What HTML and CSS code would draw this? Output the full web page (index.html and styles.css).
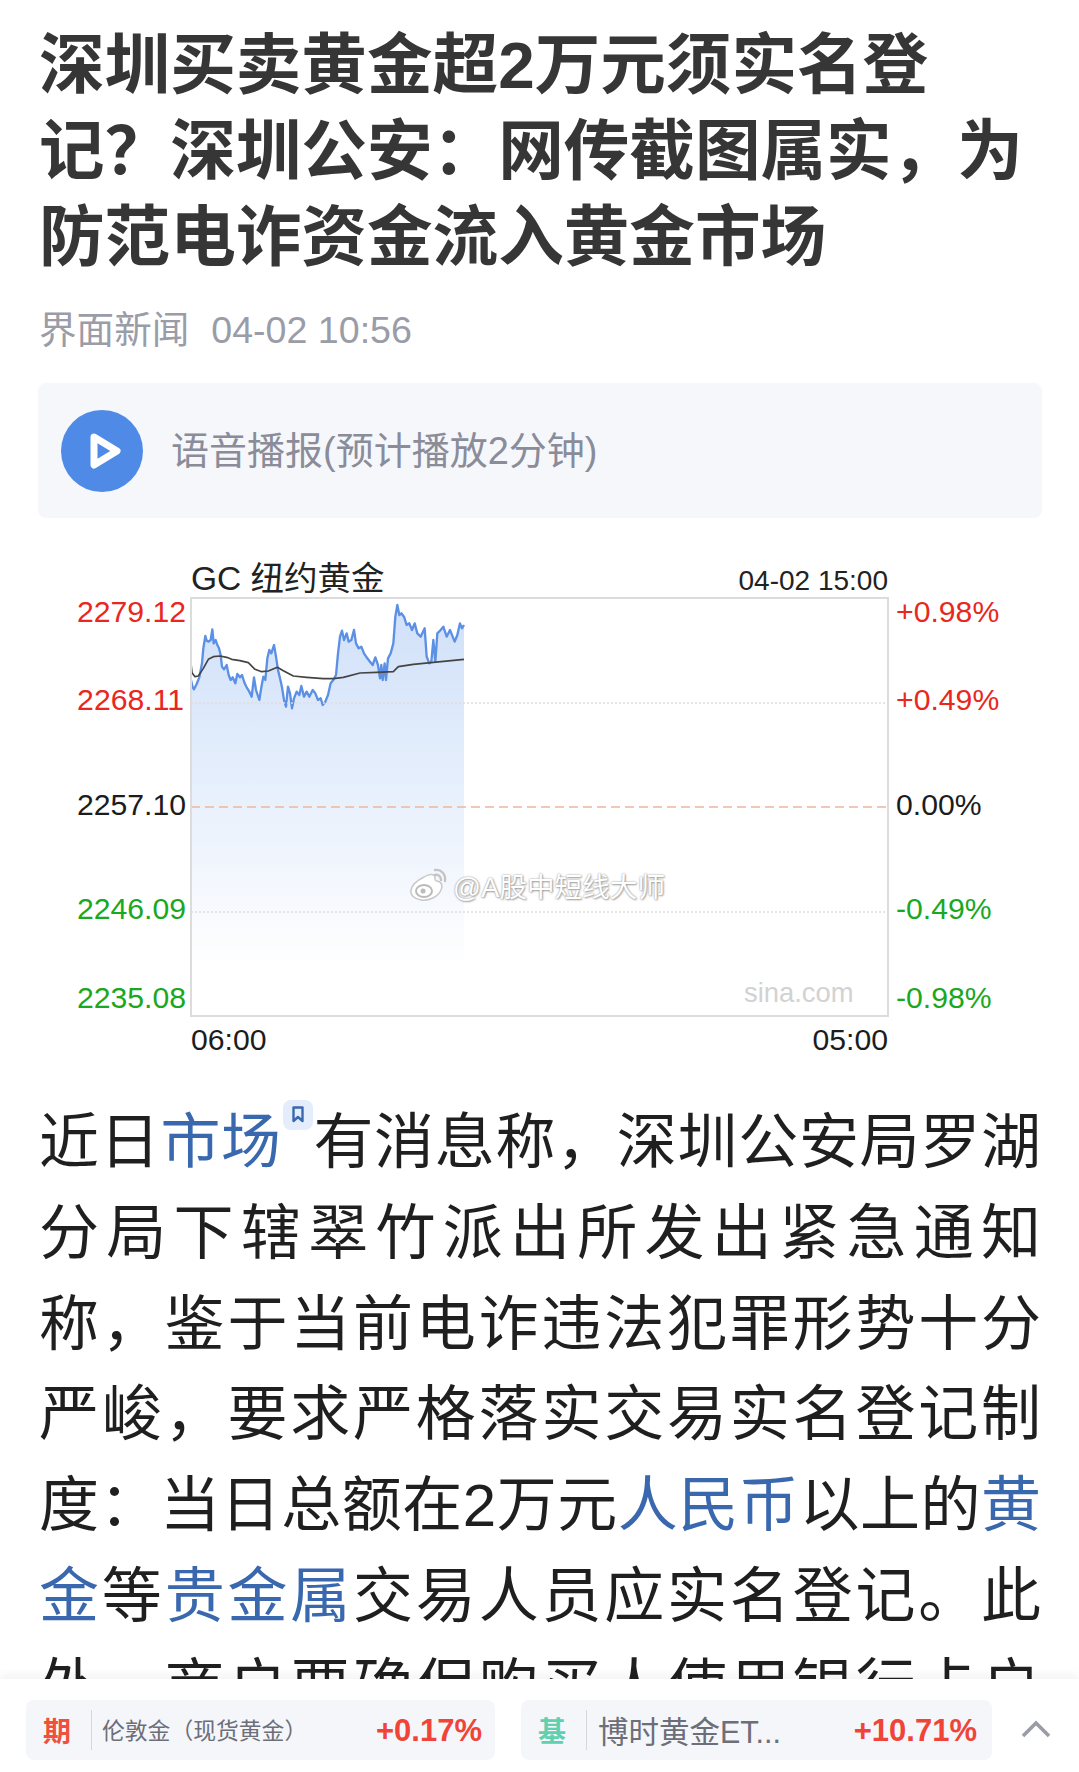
FILE: index.html
```html
<!DOCTYPE html>
<html lang="zh-CN">
<head>
	<meta charset="utf-8">
	<title>深圳买卖黄金超2万元须实名登记</title>
	<link rel="stylesheet" href="styles.css">
</head>
<body>
<div class="page">
	<main class="article">
		<h1 class="title">深圳买卖黄金超2万元须实名登记？深圳公安：网传截图属实，为防范电诈资金流入黄金市场</h1>
		<p class="meta"><span>界面新闻</span><span>04-02 10:56</span></p>

		<div class="voice">
			<svg class="voice-icon" width="82" height="82" viewBox="0 0 82 82">
				<circle cx="41" cy="41" r="41" fill="#4f8ae6"/>
				<path d="M33 27 L56 41 L33 55 Z" fill="#4f8ae6" stroke="#fff" stroke-width="7" stroke-linejoin="round"/>
			</svg>
			<span class="voice-text">语音播报(预计播放2分钟)</span>
		</div>

		<div class="chart">
			<svg class="chart-svg" width="1000" height="510" viewBox="39 550 1000 510">
				<defs>
					<linearGradient id="area" gradientUnits="userSpaceOnUse" x1="0" y1="0" x2="0" y2="1100">
						<stop offset="0" stop-color="#d0e0f9"/>
						<stop offset="0.5" stop-color="#e6effc"/>
						<stop offset="0.8" stop-color="#f5f8fe"/>
						<stop offset="1" stop-color="#ffffff"/>
					</linearGradient>
				</defs>

				<text class="chart-name" x="191" y="590">GC 纽约黄金</text>
				<text class="chart-date" x="888" y="590" text-anchor="end">04-02 15:00</text>

				<rect x="191" y="598" width="697" height="418" fill="#fff"/>

				<!-- price area + lines, points traced at 3x from x=180 y=600 -->
				<g transform="translate(180 600) scale(0.33333)">
					<path fill="url(#area)" d="M33,1100 L33,240 38,262 42,268 50,252 58,232 66,190 70,145 76,108 80,122 86,125 92,120 97,88 101,130 107,120 112,135 117,145 122,165 126,200 132,208 140,195 146,225 152,240 158,232 166,250 172,222 180,232 186,225 194,250 200,262 208,275 215,290 222,232 228,270 233,285 238,300 244,262 250,230 256,240 262,175 268,150 274,160 282,135 288,170 294,210 300,235 306,262 312,300 318,320 324,260 330,280 336,325 342,295 350,275 358,285 364,258 372,290 380,275 388,290 398,270 406,280 414,300 422,295 428,315 436,305 444,285 452,250 460,240 468,225 474,160 480,110 486,92 492,120 500,100 506,125 514,120 522,90 528,130 536,145 544,140 552,160 562,175 570,185 578,195 586,172 594,195 600,235 604,195 608,240 614,190 618,240 624,175 632,160 640,130 646,50 652,15 658,45 664,40 672,50 680,75 688,70 696,90 704,70 712,100 722,110 734,85 740,170 748,190 754,185 760,120 766,185 772,100 782,90 790,80 800,110 810,90 818,110 824,125 832,105 840,70 846,85 852,75 L852,1100 Z"/>
					<polyline class="line-price" points="33,240 38,262 42,268 50,252 58,232 66,190 70,145 76,108 80,122 86,125 92,120 97,88 101,130 107,120 112,135 117,145 122,165 126,200 132,208 140,195 146,225 152,240 158,232 166,250 172,222 180,232 186,225 194,250 200,262 208,275 215,290 222,232 228,270 233,285 238,300 244,262 250,230 256,240 262,175 268,150 274,160 282,135 288,170 294,210 300,235 306,262 312,300 318,320 324,260 330,280 336,325 342,295 350,275 358,285 364,258 372,290 380,275 388,290 398,270 406,280 414,300 422,295 428,315 436,305 444,285 452,250 460,240 468,225 474,160 480,110 486,92 492,120 500,100 506,125 514,120 522,90 528,130 536,145 544,140 552,160 562,175 570,185 578,195 586,172 594,195 600,235 604,195 608,240 614,190 618,240 624,175 632,160 640,130 646,50 652,15 658,45 664,40 672,50 680,75 688,70 696,90 704,70 712,100 722,110 734,85 740,170 748,190 754,185 760,120 766,185 772,100 782,90 790,80 800,110 810,90 818,110 824,125 832,105 840,70 846,85 852,75"/>
					<polyline class="line-avg" points="33,190 36,218 45,230 55,228 70,205 85,178 100,170 120,168 140,172 155,178 180,182 205,188 225,208 245,215 265,213 292,202 310,212 340,228 380,232 430,236 460,236 490,232 540,219 590,217 640,215 655,200 700,193 760,187 852,178"/>
				</g>

				<line class="grid-dot" x1="191" y1="703" x2="888" y2="703"/>
				<line class="grid-dot" x1="191" y1="912" x2="888" y2="912"/>
				<line class="grid-mid" x1="191" y1="807" x2="888" y2="807"/>
				<rect class="frame" x="191" y="598" width="697" height="418"/>

				<g class="axis" text-anchor="end">
					<text class="up" x="186" y="622">2279.12</text>
					<text class="up" x="184" y="710">2268.11</text>
					<text x="186" y="815">2257.10</text>
					<text class="down" x="186" y="919">2246.09</text>
					<text class="down" x="186" y="1008">2235.08</text>
				</g>
				<g class="axis">
					<text class="up" x="896" y="622">+0.98%</text>
					<text class="up" x="896" y="710">+0.49%</text>
					<text x="896" y="815">0.00%</text>
					<text class="down" x="896" y="919">-0.49%</text>
					<text class="down" x="896" y="1008">-0.98%</text>
					<text x="191" y="1050">06:00</text>
					<text x="888" y="1050" text-anchor="end">05:00</text>
				</g>
				<text class="sina" x="744" y="1002">sina.com</text>
			</svg>

			<div class="mark">
				<svg width="40" height="36" viewBox="0 0 40 36">
					<path d="M16 10 C22 6 27 7 27 11 C27 13 27 14 29 14 C34 15 35 19 33 23 C30 30 21 34 13 33 C6 32 2 28 3 23 C4 18 10 13 16 10 Z" fill="#fff" stroke="#c9c9c9" stroke-width="1.5"/>
					<ellipse cx="16" cy="24" rx="8" ry="6" fill="none" stroke="#bbb" stroke-width="2"/>
					<circle cx="15" cy="24" r="2.5" fill="#bbb"/>
					<path d="M27 3 C33 2 38 7 37 14 M27 8 C31 7 33 10 33 13" fill="none" stroke="#c4c4c4" stroke-width="2.4" stroke-linecap="round"/>
				</svg>
				<span>@A股中短线大师</span>
			</div>
		</div>

		<p class="body">近日<a class="tag">市场</a><span class="chip"><svg width="12" height="17" viewBox="0 0 12 17"><path d="M1.5 1.5 H10.5 V15 L6 11 L1.5 15 Z" fill="none" stroke="#3a68ae" stroke-width="2.4" stroke-linejoin="round"/></svg></span>有消息称，深圳公安局罗湖分局下辖翠竹派出所发出紧急通知称，鉴于当前电诈违法犯罪形势十分严峻，要求严格落实交易实名登记制度：当日总额在2万元<a class="tag">人民币</a>以上的<a class="tag">黄金</a>等<a class="tag">贵金属</a>交易人员应实名登记。此外，商户要确保购买人使用银行卡户名一致。</p>
	</main>

	<footer class="bar">
		<div class="pill">
			<span class="kind kind-qi">期</span>
			<span class="pill-name">伦敦金（现货黄金）</span>
			<span class="pill-rate">+0.17%</span>
		</div>
		<div class="pill">
			<span class="kind kind-ji">基</span>
			<span class="pill-name pill-name-big">博时黄金ET...</span>
			<span class="pill-rate">+10.71%</span>
		</div>
		<svg class="chevron" width="30" height="18" viewBox="0 0 30 18"><path d="M2 16 L15 3 L28 16" fill="none" stroke="#9a9ca6" stroke-width="3.6"/></svg>
	</footer>
</div>
</body>
</html>
```

FILE: styles.css
```css
* {
	box-sizing: border-box;
}

html, body {
	margin: 0;
	background: #fff;
}

body {
	font-family: "Liberation Sans", "Noto Sans CJK SC", sans-serif;
}

.page {
	display: flex;
	flex-direction: column;
	height: 1772px;
	overflow: hidden;
}

.article {
	flex: 1;
	min-height: 0;
	overflow: hidden;
	padding: 23px 38px 0 39px;
}

.title {
	margin: 0;
	font-size: 65.6px;
	line-height: 86px;
	font-weight: 700;
	color: #363636;
}

.meta {
	display: flex;
	gap: 22px;
	margin: 27px 0 0;
	font-size: 37.6px;
	line-height: 44px;
	color: #9a9ca8;
}

.voice {
	display: flex;
	align-items: center;
	gap: 28px;
	height: 135px;
	margin: 31px -1px 0 -1px;
	padding-left: 23px;
	background: #f5f7fb;
	border-radius: 8px;
	font-size: 38px;
	color: #8a8c99;
}

.voice-text {
	margin-top: -7px;
}

.chart {
	position: relative;
	margin-top: 32px;
}

.chart-svg {
	display: block;
}

.chart-name {
	font-size: 33.5px;
	fill: #222;
}

.chart-date {
	font-size: 28px;
	fill: #222;
}

.axis {
	font-size: 30.2px;
	fill: #1c1c1c;
}

.axis .up {
	fill: #e8281e;
}

.axis .down {
	fill: #1aa81e;
}

.sina {
	font-size: 27.4px;
	fill: #d2d2d2;
}

.frame {
	fill: none;
	stroke: #dcdcdc;
	stroke-width: 2;
}

.grid-dot {
	stroke: #dddddd;
	stroke-width: 1.5;
	stroke-dasharray: 2 2;
}

.grid-mid {
	stroke: #eeb79c;
	stroke-width: 1.5;
	stroke-dasharray: 9 5;
}

.line-price {
	fill: none;
	stroke: #5b90e4;
	stroke-width: 7;
	stroke-linejoin: round;
}

.line-avg {
	fill: none;
	stroke: #444;
	stroke-width: 5;
	stroke-linejoin: round;
}

.mark {
	position: absolute;
	left: 369px;
	top: 315px;
	display: flex;
	align-items: center;
	gap: 5px;
	font-size: 27.6px;
	color: #fff;
	text-shadow: 0 0 2px #8f8f8f, 1px 1px 2px #a8a8a8;
}

.body {
	margin: 38px 0 0;
	font-size: 60px;
	line-height: 90.8px;
	color: #1f1f1f;
	text-align: justify;
}

.tag {
	color: #3a68ae;
}

.chip {
	display: inline-flex;
	align-items: center;
	justify-content: center;
	width: 30px;
	height: 30px;
	margin: 0 0 0 1px;
	background: #e4edfb;
	border-radius: 8px;
	vertical-align: 40px;
}

.bar {
	flex: none;
	display: flex;
	align-items: center;
	height: 93px;
	padding: 0 0 0 26px;
	background: #fff;
	box-shadow: 0 -4px 10px rgba(0, 0, 0, 0.05);
}

.pill {
	display: flex;
	align-items: center;
	width: 469px;
	height: 60px;
	margin: 8px 26px 0 0;
	padding: 0 13px 0 17px;
	background: #f5f6fa;
	border-radius: 8px;
}

.pill:nth-child(2) {
	width: 471px;
	margin-right: 29px;
	padding-right: 15px;
}

.kind {
	flex: none;
	width: 49px;
	height: 40px;
	font-size: 28px;
	line-height: 46px;
	font-weight: 700;
	border-right: 1px solid #d6d7dc;
	margin-right: 10px;
}

.kind-qi {
	color: #f0503c;
}

.kind-ji {
	color: #5fd0b0;
}

.pill-name {
	flex: 1;
	font-size: 22.8px;
	color: #6c6e78;
	white-space: nowrap;
}

.pill-name-big {
	margin-left: 1px;
	font-size: 30.5px;
}

.pill-rate {
	margin-top: 3px;
	font-size: 31px;
	font-weight: 700;
	color: #f04438;
}

.chevron {
	margin: 6px 0 0 0;
}
```
